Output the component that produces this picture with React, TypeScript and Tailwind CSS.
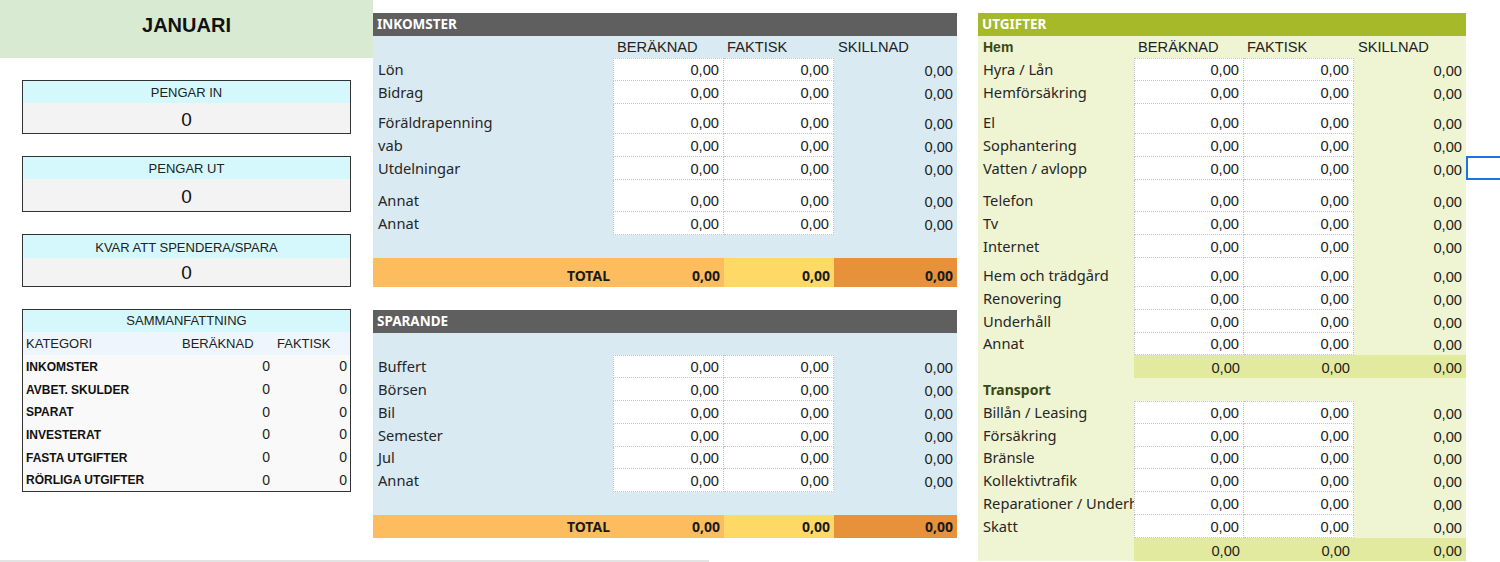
import React from 'react'

// Månadsbudget – kalkylbladsvy (januari)

const H: Record<number, string> = {
  22: 'h-[22px]',
  23: 'h-[23px]',
  29: 'h-[29px]',
  30: 'h-[30px]',
  32: 'h-[32px]',
}

const lab = "font-['Noto_Sans',sans-serif] text-[14.67px] leading-[17px] text-[#262626]"
const num = "font-['Liberation_Sans',Arial,sans-serif] text-[14.67px] leading-[17px] text-[#222]"
const arial = "font-['Liberation_Sans',Arial,sans-serif]"
const dot = 'border-dotted border-[#c4c4c4]'

type Cols = [string, string, string, string]
const MID: Cols = ['w-[240px]', 'w-[111px]', 'w-[110px]', 'w-[123px]']
const RIGHT: Cols = ['w-[156px]', 'w-[110px]', 'w-[110px]', 'w-[112px]']

type Row =
  | { kind: 'item'; label: string; h: number; first?: boolean }
  | { kind: 'blank'; h: number }
  | { kind: 'sub'; h: number }
  | { kind: 'cat'; label: string; h: number }

function SheetRow({ row, cols }: { row: Row; cols: Cols }) {
  const h = H[row.h]
  if (row.kind === 'blank') return <div className={h} />
  if (row.kind === 'cat')
    return (
      <div className={`${h} flex items-end pb-[3px] pl-[5px]`}>
        <span className="font-['Noto_Sans',sans-serif] text-[14px] leading-[17px] font-bold text-[#3a4816]">
          {row.label}
        </span>
      </div>
    )
  if (row.kind === 'sub')
    return (
      <div className={`${h} flex`}>
        <div className={cols[0]} />
        <div className="flex flex-1 bg-[#e2ea9f]">
          <div className={`${cols[1]} flex items-end justify-end pb-[1px] pr-[4px] ${num}`}>0,00</div>
          <div className={`${cols[2]} flex items-end justify-end pb-[1px] pr-[4px] ${num}`}>0,00</div>
          <div className={`${cols[3]} flex items-end justify-end pb-[1px] pr-[4px] ${num}`}>0,00</div>
        </div>
      </div>
    )
  return (
    <div className={`${h} flex`}>
      <div className={`${cols[0]} flex items-end overflow-hidden whitespace-nowrap pb-[3px] pl-[5px] ${lab}`}>
        {row.label}
      </div>
      <div
        className={`${cols[1]} flex items-end justify-end bg-white pb-[1px] pr-[4px] border-l border-r border-b ${
          row.first ? 'border-t' : ''
        } ${dot} ${num}`}
      >
        0,00
      </div>
      <div
        className={`${cols[2]} flex items-end justify-end bg-white pb-[1px] pr-[4px] border-r border-b ${
          row.first ? 'border-t' : ''
        } ${dot} ${num}`}
      >
        0,00
      </div>
      <div className={`${cols[3]} flex items-end justify-end pb-[1px] pr-[4px] ${num}`}>0,00</div>
    </div>
  )
}

function ColHeads({ cols, first }: { cols: Cols; first?: string }) {
  return (
    <div className={`h-[22px] flex ${arial} text-[14.67px] leading-[17px] text-[#222]`}>
      <div className={`${cols[0]} flex items-end pb-[2px] pl-[5px]`}>
        {first && (
          <span className="font-bold text-[14px] text-[#3a4816]">{first}</span>
        )}
      </div>
      <div className={`${cols[1]} flex items-end pb-[2px] pl-[4px]`}>BERÄKNAD</div>
      <div className={`${cols[2]} flex items-end pb-[2px] pl-[3px]`}>FAKTISK</div>
      <div className={`${cols[3]} flex items-end pb-[2px] pl-[4px]`}>SKILLNAD</div>
    </div>
  )
}

function Bar({ title, color }: { title: string; color: string }) {
  return (
    <div
      className={`h-[23px] flex items-center pl-[4px] ${color} font-['Noto_Sans',sans-serif] text-[13.5px] font-bold text-white`}
    >
      {title}
    </div>
  )
}

function Total({ h }: { h: string }) {
  const v = "font-['Noto_Sans',sans-serif] text-[14px] leading-[17px] font-bold text-[#1a1a1a]"
  return (
    <div className={`${h} flex`}>
      <div className={`w-[351px] flex items-end justify-end bg-[#fdbd5f] pb-[3px] pr-[4px] ${v}`}>
        <span className="mr-[82px]">TOTAL</span>
        0,00
      </div>
      <div className={`w-[110px] flex items-end justify-end bg-[#fed966] pb-[3px] pr-[4px] ${v}`}>0,00</div>
      <div className={`w-[123px] flex items-end justify-end bg-[#e7913a] pb-[3px] pr-[4px] ${v}`}>0,00</div>
    </div>
  )
}

const income: Row[] = [
  { kind: 'item', label: 'Lön', h: 23, first: true },
  { kind: 'item', label: 'Bidrag', h: 23 },
  { kind: 'item', label: 'Föräldrapenning', h: 30 },
  { kind: 'item', label: 'vab', h: 23 },
  { kind: 'item', label: 'Utdelningar', h: 23 },
  { kind: 'item', label: 'Annat', h: 32 },
  { kind: 'item', label: 'Annat', h: 23 },
  { kind: 'blank', h: 23 },
]

const savings: Row[] = [
  { kind: 'blank', h: 22 },
  { kind: 'item', label: 'Buffert', h: 23, first: true },
  { kind: 'item', label: 'Börsen', h: 23 },
  { kind: 'item', label: 'Bil', h: 23 },
  { kind: 'item', label: 'Semester', h: 23 },
  { kind: 'item', label: 'Jul', h: 22 },
  { kind: 'item', label: 'Annat', h: 23 },
  { kind: 'blank', h: 23 },
]

const expenses: Row[] = [
  { kind: 'item', label: 'Hyra / Lån', h: 23, first: true },
  { kind: 'item', label: 'Hemförsäkring', h: 23 },
  { kind: 'item', label: 'El', h: 30 },
  { kind: 'item', label: 'Sophantering', h: 23 },
  { kind: 'item', label: 'Vatten / avlopp', h: 23 },
  { kind: 'item', label: 'Telefon', h: 32 },
  { kind: 'item', label: 'Tv', h: 23 },
  { kind: 'item', label: 'Internet', h: 23 },
  { kind: 'item', label: 'Hem och trädgård', h: 29 },
  { kind: 'item', label: 'Renovering', h: 23 },
  { kind: 'item', label: 'Underhåll', h: 23 },
  { kind: 'item', label: 'Annat', h: 22 },
  { kind: 'sub', h: 23 },
  { kind: 'cat', label: 'Transport', h: 23 },
  { kind: 'item', label: 'Billån / Leasing', h: 23, first: true },
  { kind: 'item', label: 'Försäkring', h: 23 },
  { kind: 'item', label: 'Bränsle', h: 22 },
  { kind: 'item', label: 'Kollektivtrafik', h: 23 },
  { kind: 'item', label: 'Reparationer / Underhåll', h: 23 },
  { kind: 'item', label: 'Skatt', h: 23 },
  { kind: 'sub', h: 23 },
]

function StatBox({ title, head, body, valuePad }: { title: string; head: string; body: string; valuePad: string }) {
  return (
    <div className={`mx-[22px] border border-[#333] ${arial}`}>
      <div className={`${head} flex items-center justify-center bg-[#d5f8fd] pt-[2px] text-[13px] text-[#222]`}>{title}</div>
      <div className={`${body} flex items-start justify-center bg-[#f3f3f3] ${valuePad} text-[19px] leading-[22px] text-[#111]`}>
        0
      </div>
    </div>
  )
}

const summary = [
  { label: 'INKOMSTER', h: 'h-[23px]' },
  { label: 'AVBET. SKULDER', h: 'h-[23px]' },
  { label: 'SPARAT', h: 'h-[22px]' },
  { label: 'INVESTERAT', h: 'h-[23px]' },
  { label: 'FASTA UTGIFTER', h: 'h-[23px]' },
  { label: 'RÖRLIGA UTGIFTER', h: 'h-[22px]' },
]

export default function App() {
  return (
    <div className="flex h-[562px] w-[1500px] overflow-hidden bg-white">
      {/* vänster: översikt */}
      <div className="flex w-[373px] shrink-0 flex-col">
        <div className={`h-[58px] bg-[#d9ead3] pt-[13px] text-center ${arial} text-[20px] font-bold leading-[24px] text-[#111]`}>
          JANUARI
        </div>
        <div className="mt-[22px] flex flex-col gap-[22px]">
          <StatBox title="PENGAR IN" head="h-[22px]" body="h-[30px]" valuePad="pt-[6px]" />
          <StatBox title="PENGAR UT" head="h-[22px]" body="h-[32px]" valuePad="pt-[7px]" />
          <StatBox title="KVAR ATT SPENDERA/SPARA" head="h-[23px]" body="h-[28px]" valuePad="pt-[4px]" />
          <div className={`mx-[22px] border border-[#333] ${arial} text-[#222]`}>
            <div className="flex h-[22px] items-center justify-center bg-[#d5f8fd] text-[13px]">SAMMANFATTNING</div>
            <div className="flex h-[23px] items-center bg-[#eef5fd] text-[13px]">
              <div className="w-[159px] pl-[3px]">KATEGORI</div>
              <div className="w-[95px]">BERÄKNAD</div>
              <div>FAKTISK</div>
            </div>
            <div className="bg-[#f9f9f9]">
              {summary.map((r) => (
                <div key={r.label} className={`${r.h} flex items-center`}>
                  <div className="w-[150px] pl-[3px] text-[12px] font-bold text-[#111]">{r.label}</div>
                  <div className="w-[97px] text-right text-[14px]">0</div>
                  <div className="flex-1 pr-[3px] text-right text-[14px]">0</div>
                </div>
              ))}
            </div>
          </div>
        </div>
        <div className="mt-auto h-[2px] bg-[#e3e3e3]" />
      </div>

      {/* mitten: inkomster och sparande */}
      <div className="flex w-[584px] shrink-0 flex-col pt-[13px]">
        <Bar title="INKOMSTER" color="bg-[#5f5f5f]" />
        <div className="bg-[#daeaf2]">
          <ColHeads cols={MID} />
          {income.map((r, i) => (
            <SheetRow key={i} row={r} cols={MID} />
          ))}
        </div>
        <Total h="h-[29px]" />
        <div className="h-[23px]" />
        <Bar title="SPARANDE" color="bg-[#5f5f5f]" />
        <div className="bg-[#daeaf2]">
          {savings.map((r, i) => (
            <SheetRow key={i} row={r} cols={MID} />
          ))}
        </div>
        <Total h="h-[23px]" />
        <div className="mt-auto h-[2px] w-[336px] bg-[#e3e3e3]" />
      </div>

      <div className="w-[21px] shrink-0" />

      {/* höger: utgifter */}
      <div className="flex w-[488px] shrink-0 flex-col pt-[13px]">
        <Bar title="UTGIFTER" color="bg-[#a6b929]" />
        <div className="bg-[#eff4d2]">
          <ColHeads cols={RIGHT} first="Hem" />
          {expenses.map((r, i) => (
            <SheetRow key={i} row={r} cols={RIGHT} />
          ))}
        </div>
      </div>

      {/* markerad cell */}
      <div className="w-[40px] shrink-0 pt-[156px]">
        <div className="h-[24px] w-[40px] border-2 border-[#1a73e8]" />
      </div>
    </div>
  )
}
